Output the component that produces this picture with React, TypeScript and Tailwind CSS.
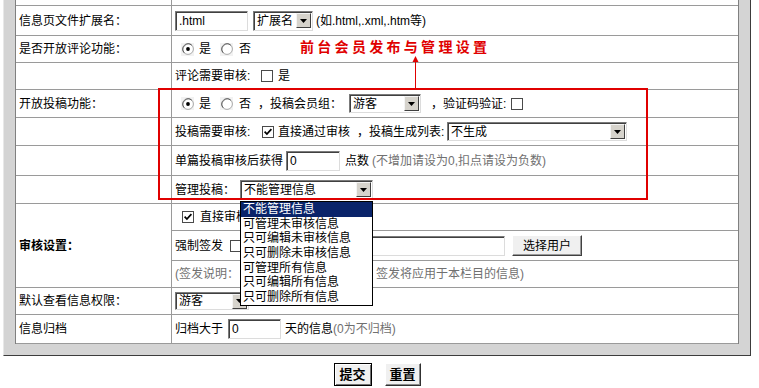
import React from "react";

const ff = "[font-family:'Liberation_Sans','Noto_Sans_CJK_SC',sans-serif]";

function Radio({ on, cls = "" }: { on?: boolean; cls?: string }) {
  return (
    <span className={`w-[13px] h-[13px] bg-[#f2f2f2] flex items-center justify-center shrink-0 ${cls}`}>
      <svg width="12" height="12" viewBox="0 0 12 12">
        <circle cx="6" cy="6" r="5.4" fill="#fff" stroke="#a8a8a8" />
        <path d="M2.2 9.8 A5.4 5.4 0 0 1 9.8 2.2" stroke="#5a5a5a" fill="none" />
        {on && <circle cx="6" cy="6" r="1.9" fill="#000" />}
      </svg>
    </span>
  );
}

function Check({ on, cls = "" }: { on?: boolean; cls?: string }) {
  return (
    <svg className={`shrink-0 ${cls}`} width="12" height="12" viewBox="0 0 12 12">
      <rect x="0.5" y="0.5" width="11" height="11" fill="#fff" stroke="#4a4a4a" />
      {on && <path d="M2.6 5.6 L4.9 8 L9.4 3.2" stroke="#000" strokeWidth="1.7" fill="none" />}
    </svg>
  );
}

function Arr() {
  return (
    <span className="w-[15px] h-[15px] mr-[1px] bg-[#d6d3cc] border border-t-[#f4f4f4] border-l-[#f4f4f4] border-r-[#404040] border-b-[#404040] flex items-center justify-center shrink-0">
      <svg width="7" height="4" viewBox="0 0 7 4">
        <path d="M0 0 H7 L3.5 4 Z" fill="#000" />
      </svg>
    </span>
  );
}

function Sel({ cls, v }: { cls: string; v: string }) {
  return (
    <div
      className={`flex items-center justify-between bg-white border border-t-[#7b7b7b] border-l-[#7b7b7b] border-r-[#dcdcdc] border-b-[#dcdcdc] shadow-[inset_1px_1px_0_#404040] shrink-0 ${cls}`}
    >
      <span className="pl-[3px] leading-none">{v}</span>
      <Arr />
    </div>
  );
}

function Inp({ cls, v }: { cls: string; v?: string }) {
  return (
    <div
      className={`flex items-center bg-white border border-t-[#7b7b7b] border-l-[#7b7b7b] border-r-[#dcdcdc] border-b-[#dcdcdc] shadow-[inset_1px_1px_0_#404040] pl-[3px] leading-none shrink-0 ${cls}`}
    >
      {v}
    </div>
  );
}

function Row({
  h,
  label,
  children,
}: {
  h: string;
  label?: string;
  children?: React.ReactNode;
}) {
  return (
    <div className={`flex border-b border-[#9a9a9a] ${h}`}>
      <div className="w-[156px] shrink-0 border-r border-[#9a9a9a] pl-[3px] flex items-center">
        {label}
      </div>
      <div className="flex-1 flex items-center pl-[3px] whitespace-nowrap">{children}</div>
    </div>
  );
}

const items = [
  "不能管理信息",
  "可管理未审核信息",
  "只可编辑未审核信息",
  "只可删除未审核信息",
  "可管理所有信息",
  "只可编辑所有信息",
  "只可删除所有信息",
];

export default function App() {
  return (
    <div className={`w-[759px] h-[388px] bg-white overflow-hidden text-[12px] text-black ${ff}`}>
      <div className="ml-[3px] w-[748px] bg-[#d4d4d4] border-l border-l-[#e8e8e8] border-r border-b border-r-[#3c3c3c] border-b-[#3c3c3c] px-[11px] pb-[11px]">
        <div className="relative bg-white border-l border-r border-[#808080]">
          <Row h="h-[6px]" />
          <Row h="h-[30px]" label="信息页文件扩展名：">
            <Inp cls="w-[73px] h-[20px]" v=".html" />
            <Sel cls="ml-[5px] w-[60px] h-[20px]" v="扩展名" />
            <span className="ml-[3px]">(如.html,.xml,.htm等)</span>
          </Row>
          <Row h="h-[27px]" label="是否开放评论功能：">
            <Radio on cls="ml-[6px]" />
            <span className="ml-[5px]">是</span>
            <Radio cls="ml-[9px]" />
            <span className="ml-[6px]">否</span>
          </Row>
          <Row h="h-[27px]">
            <span className="w-[86px]">评论需要审核:</span>
            <Check />
            <span className="ml-[5px]">是</span>
          </Row>
          <Row h="h-[28px]" label="开放投稿功能：">
            <Radio on cls="ml-[6px]" />
            <span className="ml-[5px]">是</span>
            <Radio cls="ml-[9px]" />
            <span className="ml-[6px]">否</span>
            <span className="ml-[7px] w-[86px]">，投稿会员组：</span>
            <Sel cls="ml-[5px] w-[72px] h-[19px]" v="游客" />
            <span className="ml-[10px] w-[80px]">，验证码验证:</span>
            <Check />
          </Row>
          <Row h="h-[28px]">
            <span className="w-[87px]">投稿需要审核:</span>
            <Check on />
            <span className="ml-[4px]">直接通过审核</span>
            <span className="ml-[7px] w-[90px]">，投稿生成列表:</span>
            <Sel cls="w-[180px] h-[19px]" v="不生成" />
          </Row>
          <Row h="h-[30px]">
            <span className="w-[111px]">单篇投稿审核后获得</span>
            <Inp cls="w-[54px] h-[20px]" v="0" />
            <span className="ml-[5px]">点数</span>
            <span className="ml-[3px] text-[#707070]">(不增加请设为0,扣点请设为负数)</span>
          </Row>
          <Row h="h-[28px]">
            <span className="w-[65px]">管理投稿：</span>
            <Sel cls="w-[133px] h-[19px]" v="不能管理信息" />
          </Row>
          <div className="flex border-b border-[#9a9a9a]">
            <div className="w-[156px] shrink-0 border-r border-[#9a9a9a] pl-[3px] flex items-center font-bold">
              审核设置：
            </div>
            <div className="flex-1 flex flex-col whitespace-nowrap">
              <div className="h-[27px] border-b border-[#9a9a9a] flex items-center pl-[3px]">
                <Check on cls="ml-[7px]" />
                <span className="ml-[6px]">直接审核</span>
              </div>
              <div className="h-[30px] border-b border-[#9a9a9a] flex items-center pl-[3px]">
                <span className="w-[55px]">强制签发</span>
                <Check />
                <Inp cls="ml-[6px] w-[257px] h-[20px]" />
                <button className="ml-[7px] w-[70px] h-[21px] bg-[#f0f0f0] border border-t-white border-l-white border-r-[#404040] border-b-[#404040] shadow-[inset_-1px_-1px_0_#9a9a9a] text-[12px]">
                  选择用户
                </button>
              </div>
              <div className="h-[26px] flex items-center pl-[3px] text-[#707070]">
                <span className="w-[201px]">(签发说明：</span>
                <span>签发将应用于本栏目的信息)</span>
              </div>
            </div>
          </div>
          <Row h="h-[27px]" label="默认查看信息权限：">
            <Sel cls="w-[74px] h-[18px]" v="游客" />
          </Row>
          <Row h="h-[29px]" label="信息归档">
            <span className="w-[53px]">归档大于</span>
            <Inp cls="w-[53px] h-[20px]" v="0" />
            <span className="ml-[4px]">天的信息</span>
            <span className="text-[#707070]">(0为不归档)</span>
          </Row>

          {/* annotation */}
          <div className="absolute left-[284px] top-[39px] text-[14px] leading-[17px] font-bold tracking-[3.3px] text-[#e00000] whitespace-nowrap">
            前台会员发布与管理设置
          </div>
          <svg className="absolute left-[396px] top-[56px]" width="7" height="33" viewBox="0 0 7 33">
            <path d="M3.5 0 L6.5 6 L0.5 6 Z" fill="#e00000" />
            <path d="M3.5 5 V33" stroke="#e00000" strokeWidth="1" />
          </svg>
          <div className="absolute left-[142px] top-[88px] w-[490px] h-[112px] border-2 border-[#e00000]" />

          {/* open dropdown list */}
          <div className="absolute left-[224px] top-[201px] w-[133px] bg-white border border-black">
            {items.map((t, i) => (
              <div
                key={t}
                className={
                  i === 0
                    ? "h-[14.7px] leading-[14.7px] pl-[2px] bg-[#0a246a] text-white whitespace-nowrap"
                    : "h-[14.7px] leading-[14.7px] pl-[2px] text-black whitespace-nowrap"
                }
              >
                {t}
              </div>
            ))}
          </div>
        </div>
      </div>
      <div className="ml-[3px] w-[748px] flex justify-center gap-[13px] mt-[7px]">
        <button className="w-[38px] h-[23px] border border-black bg-[#f0f0f0] shadow-[inset_1px_1px_0_#fff,inset_-1px_-1px_0_#707070] font-bold text-[13px] leading-none">
          提交
        </button>
        <button className="w-[36px] h-[23px] bg-[#f0f0f0] border border-t-white border-l-white border-r-[#303030] border-b-[#303030] shadow-[inset_-1px_-1px_0_#8a8a8a] font-bold text-[13px] leading-none">
          重置
        </button>
      </div>
    </div>
  );
}
